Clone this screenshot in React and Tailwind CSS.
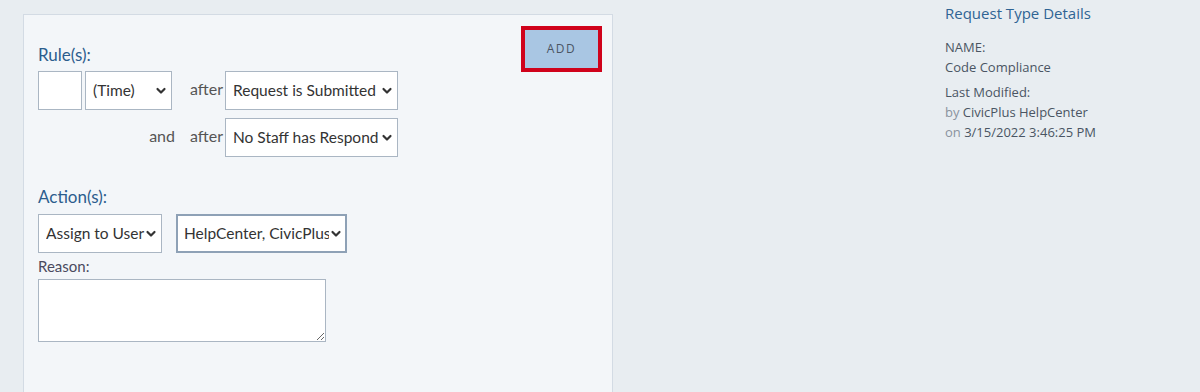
import React from "react";

const font = { fontFamily: '"Open Sans", "Liberation Sans", sans-serif' };
const lato = { fontFamily: 'Lato, "Open Sans", sans-serif' };

function Chevron() {
  return (
    <svg width="12" height="8" viewBox="0 0 12 8" className="pointer-events-none absolute right-[5px] top-1/2 -translate-y-1/2">
      <path d="M2.5 2 L6 5.5 L9.5 2" fill="none" stroke="#333" strokeWidth="2.2" strokeLinecap="round" strokeLinejoin="round" />
    </svg>
  );
}

function Select({ value, w, thick, pad = "pl-[7px] pr-[19px]" }) {
  return (
    <div className={`relative h-[39px] ${w} shrink-0`}>
      <select
        defaultValue={value}
        className={`h-full w-full appearance-none bg-white text-[15.5px] text-[#333] outline-none ${pad} ${thick ? "border-2 border-[#8ea1b6]" : "border border-[#aab6c3]"}`}
        style={lato}
      >
        <option>{value}</option>
      </select>
      <Chevron />
    </div>
  );
}

export default function App() {
  return (
    <div className="flex h-[392px] w-[1200px] justify-between overflow-hidden bg-[#e8edf1] pl-[23px]" style={font}>
      <div className="mt-[14px] flex h-[378px] w-[590px] border border-b-0 border-[#d3dbe4] bg-[#f3f6f9] pl-[14px] pr-[10px] pt-[11px]">
        <div className="flex flex-1 flex-col pt-[18px]" style={lato}>
          <div className="text-[17px] leading-[22px] text-[#2c5d8d]">Rule(s):</div>
          <div className="mt-[5px] flex items-center">
            <div className="flex w-[152px] items-center">
              <input className="h-[39px] w-[44px] border border-[#aab6c3] bg-white outline-none" />
              <div className="ml-[3px]">
                <Select value="(Time)" w="w-[87px]" />
              </div>
            </div>
            <span className="w-[35px] pb-[3px] text-[16px] text-[#555]">after</span>
            <Select value="Request is Submitted" w="w-[173px]" />
          </div>
          <div className="mt-[8px] flex items-center">
            <div className="flex w-[152px] justify-end pb-[3px] pr-[15px] text-[16px] text-[#555]">and</div>
            <span className="w-[35px] pb-[3px] text-[16px] text-[#555]">after</span>
            <Select value="No Staff has Responded" w="w-[173px]" />
          </div>
          <div className="mt-[29px] text-[17px] leading-[22px] text-[#2c5d8d]">Action(s):</div>
          <div className="mt-[6px] flex items-center gap-[14px]">
            <Select value="Assign to User" w="w-[124px]" pad="pl-[7px] pr-[14px]" />
            <Select value="HelpCenter, CivicPlus" w="w-[171px]" thick pad="pl-[6px] pr-[16px]" />
          </div>
          <div className="mt-[4px] text-[15px] leading-[18px] text-[#4a4a5e]">Reason:</div>
          <textarea className="mt-[4px] h-[63px] w-[288px] border border-[#aab6c3] bg-white outline-none" />
        </div>
        <button className="h-[46px] w-[81px] self-start border-4 border-[#d0021b] bg-[#a9c6e3] text-[12px] tracking-[1.5px] text-[#4b5563]" style={font}>
          ADD
        </button>
      </div>
      <div className="w-[255px] pt-[3px] text-[13px] leading-[20px] text-[#4a5563]">
        <div className="text-[15px] leading-[20px] text-[#2f6494]">Request Type Details</div>
        <div className="mt-[14px]">NAME:</div>
        <div>Code Compliance</div>
        <div className="mt-[5px]">Last Modified:</div>
        <div><span className="text-[#8a939e]">by</span> CivicPlus HelpCenter</div>
        <div><span className="text-[#8a939e]">on</span> 3/15/2022 3:46:25 PM</div>
      </div>
    </div>
  );
}
